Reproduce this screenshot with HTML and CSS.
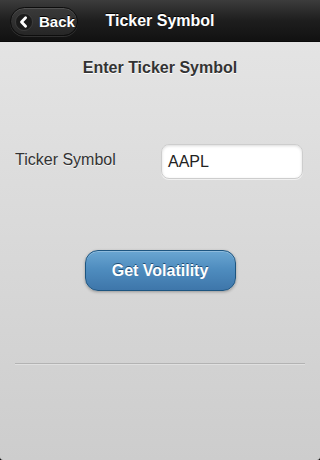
FILE: index.html
```html
<!DOCTYPE html>
<html>
<head>
<meta charset="utf-8">
<link rel="stylesheet" href="styles.css">
</head>
<body>
<div class="page">
  <header class="bar">
    <a class="back">
      <svg class="back-icon" width="18" height="18" viewBox="0 0 18 18">
        <circle cx="9" cy="9" r="8.5" fill="#1b1b1b" stroke="#555" stroke-width="0.5"/>
        <path d="M10.6 4.8 L6.5 9 L10.6 13.2" fill="none" stroke="#fff" stroke-width="2.8" stroke-linecap="round" stroke-linejoin="round"/>
      </svg>
      <span>Back</span>
    </a>
    <h1 class="title">Ticker Symbol</h1>
  </header>
  <main class="content">
    <h2 class="heading">Enter Ticker Symbol</h2>
    <div class="field">
      <label class="label">Ticker Symbol</label>
      <div class="input">AAPL</div>
    </div>
    <div class="actions">
      <button class="btn">Get Volatility</button>
    </div>
    <hr class="rule">
  </main>
</div>
</body>
</html>
```
FILE: styles.css
```css
html, body {
  margin: 0;
  padding: 0;
  background: #000;
}
body {
  font-family: "Liberation Sans", Arial, sans-serif;
  width: 320px;
  height: 460px;
  overflow: hidden;
}
.page {
  height: 460px;
  background: linear-gradient(#e6e6e6, #cdcdcd);
  border-radius: 0 0 3px 3px;
  display: flex;
  flex-direction: column;
}
.bar {
  position: relative;
  height: 41px;
  background: linear-gradient(#3c3c3c, #1e1e1e 50%, #111);
  border-bottom: 1px solid #0a0a0a;
  display: flex;
  align-items: center;
  justify-content: center;
}
.back {
  position: absolute;
  left: 10px;
  top: 7px;
  height: 27px;
  width: 66px;
  box-sizing: content-box;
  border: 1px solid #0d0d0d;
  border-radius: 15px;
  background: linear-gradient(#3a3a3a, #262626);
  box-shadow: inset 0 1px 0 rgba(255,255,255,0.12), 0 1px 0 rgba(255,255,255,0.12);
  display: flex;
  align-items: center;
  color: #fff;
  font-weight: bold;
  font-size: 15px;
  text-shadow: 0 -1px 0 #000;
}
.back-icon {
  margin-left: 4px;
  margin-right: 6px;
}
.title {
  margin: 0;
  color: #fff;
  font-size: 16px;
  font-weight: bold;
  text-shadow: 0 -1px 0 #000;
  line-height: 20px;
}
.content {
  padding: 16px 15px 0;
  flex: 1;
}
.heading {
  margin: 0;
  text-align: center;
  font-size: 16px;
  line-height: 20px;
  font-weight: bold;
  color: #333;
  text-shadow: 0 1px 0 #fff;
}
.field {
  margin-top: 66px;
  display: flex;
  align-items: center;
  justify-content: space-between;
}
.label {
  font-size: 16px;
  color: #333;
  text-shadow: 0 1px 0 #f4f4f4;
  margin-top: -3px;
}
.input {
  width: 140px;
  height: 33px;
  margin-right: 2px;
  box-sizing: content-box;
  background: #fff;
  border: 1px solid #cdcdcd;
  border-radius: 8px;
  box-shadow: inset 0 1px 3px rgba(0,0,0,0.15), 0 1px 0 rgba(255,255,255,0.6);
  font-size: 16px;
  line-height: 33px;
  text-indent: 6px;
  color: #222;
}
.actions {
  margin-top: 71px;
  display: flex;
  justify-content: center;
}
.btn {
  width: 151px;
  height: 41px;
  border: 1px solid #1d5580;
  border-radius: 13px;
  background: linear-gradient(#6aa6d2, #4f8dbf 45%, #3e76aa);
  box-shadow: inset 0 1px 0 rgba(255,255,255,0.25), 0 1px 3px rgba(0,0,0,0.3);
  color: #fff;
  font-family: "Liberation Sans", Arial, sans-serif;
  font-size: 16px;
  font-weight: bold;
  text-shadow: 0 -1px 0 #1f4f78;
  padding: 0;
}
.rule {
  margin: 72px 0 0;
  border: 0;
  border-top: 1px solid #b3b3b3;
  border-bottom: 1px solid #e0e0e0;
  height: 0;
}
```
